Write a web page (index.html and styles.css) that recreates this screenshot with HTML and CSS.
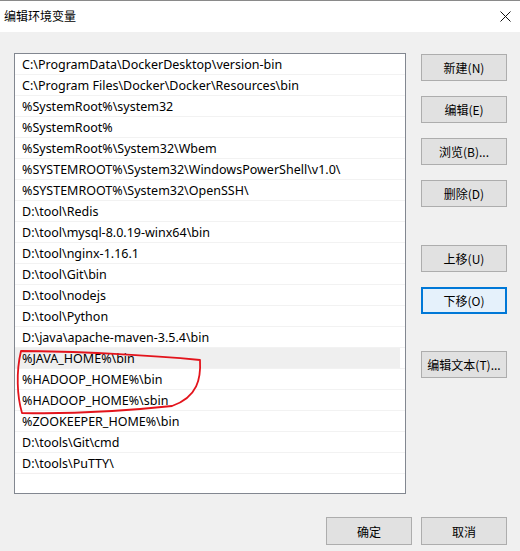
FILE: index.html
```html
<!DOCTYPE html>
<html lang="zh-CN">
<head>
<meta charset="utf-8">
<title>编辑环境变量</title>
<link rel="stylesheet" href="styles.css">
</head>
<body>
<div class="window">
  <div class="titlebar">
    <span class="title">编辑环境变量</span>
    <span class="close">
      <svg width="11" height="11" viewBox="0 0 11 11"><path d="M0.5 0.5 L10.5 10.5 M10.5 0.5 L0.5 10.5" stroke="#111" stroke-width="1" fill="none"/></svg>
    </span>
  </div>
  <div class="content">
    <div class="main">
      <div class="list">
        <div class="row">C:\ProgramData\DockerDesktop\version-bin</div>
        <div class="row">C:\Program Files\Docker\Docker\Resources\bin</div>
        <div class="row">%SystemRoot%\system32</div>
        <div class="row">%SystemRoot%</div>
        <div class="row">%SystemRoot%\System32\Wbem</div>
        <div class="row">%SYSTEMROOT%\System32\WindowsPowerShell\v1.0\</div>
        <div class="row">%SYSTEMROOT%\System32\OpenSSH\</div>
        <div class="row">D:\tool\Redis</div>
        <div class="row">D:\tool\mysql-8.0.19-winx64\bin</div>
        <div class="row">D:\tool\nginx-1.16.1</div>
        <div class="row">D:\tool\Git\bin</div>
        <div class="row">D:\tool\nodejs</div>
        <div class="row">D:\tool\Python</div>
        <div class="row">D:\java\apache-maven-3.5.4\bin</div>
        <div class="row selected">%JAVA_HOME%\bin</div>
        <div class="row">%HADOOP_HOME%\bin</div>
        <div class="row">%HADOOP_HOME%\sbin</div>
        <div class="row">%ZOOKEEPER_HOME%\bin</div>
        <div class="row">D:\tools\Git\cmd</div>
        <div class="row">D:\tools\PuTTY\</div>
        <svg class="mark" width="392" height="441" viewBox="14 53 392 441">
          <path d="M21 351 C70 351 150 355 200 360 C201 378 198 397 172 406 C125 411 65 414 22 413 C17 396 16 372 21 351 Z" fill="none" stroke="#e3141c" stroke-width="1.8" stroke-linejoin="round"/>
        </svg>
      </div>
      <div class="side">
        <button class="btn">新建(N)</button>
        <button class="btn">编辑(E)</button>
        <button class="btn">浏览(B)...</button>
        <button class="btn">删除(D)</button>
        <button class="btn gap-lg">上移(U)</button>
        <button class="btn focused">下移(O)</button>
        <button class="btn gap-lg2">编辑文本(T)...</button>
      </div>
    </div>
    <div class="footer">
      <button class="btn">确定</button>
      <button class="btn">取消</button>
    </div>
  </div>
</div>
</body>
</html>
```

FILE: styles.css
```css
* { box-sizing: border-box; }
html, body {
  margin: 0;
  padding: 0;
  width: 520px;
  height: 551px;
  overflow: hidden;
}
body {
  font-family: "Noto Sans", "Noto Sans CJK SC", sans-serif;
  font-size: 12px;
  color: #000;
  background: #f0f0f0;
}
.window {
  width: 520px;
  height: 551px;
  display: flex;
  flex-direction: column;
}
.titlebar {
  height: 32px;
  background: #fff;
  border-top: 1px solid #8a8a8a;
  display: flex;
  align-items: center;
  justify-content: space-between;
  padding: 0 9px 1px 4px;
}
.title {
  font-family: "Noto Sans CJK SC", sans-serif;
  font-size: 12px;
  line-height: 16px;
  color: #000;
}
.close {
  display: flex;
  width: 11px;
  height: 11px;
}
.content {
  flex: 1;
  display: flex;
  flex-direction: column;
  padding: 21px 13px 0 14px;
}
.main {
  display: flex;
  align-items: flex-start;
}
.list {
  position: relative;
  width: 392px;
  height: 441px;
  background: #fff;
  border: 1px solid #828790;
}
.row {
  height: 21px;
  line-height: 20px;
  padding: 1px 0 0 7px;
  border-bottom: 1px solid #f2f2f2;
  white-space: nowrap;
  overflow: hidden;
  font-family: "Noto Sans", "Noto Sans CJK SC", sans-serif;
  font-size: 12.5px;
  color: #000;
}
.row.selected {
  background: linear-gradient(to right, #efefef calc(100% - 5px), #fff 0);
}
.mark {
  position: absolute;
  left: -1px;
  top: -1px;
  pointer-events: none;
}
.side {
  margin-left: 15px;
  display: flex;
  flex-direction: column;
  gap: 15px;
  padding-top: 1px;
}
.btn {
  width: 86px;
  height: 27px;
  padding: 0;
  margin: 0;
  background: #e1e1e1;
  border: 1px solid #adadad;
  font-family: "Noto Sans CJK SC", sans-serif;
  font-size: 12px;
  color: #000;
  display: flex;
  align-items: center;
  justify-content: center;
}
.btn.focused {
  background: #e5f1fb;
  border: 2px solid #0078d7;
}
.gap-lg { margin-top: 23px; }
.gap-lg2 { margin-top: 22px; }
.footer {
  display: flex;
  justify-content: flex-end;
  gap: 9px;
  margin-top: 23px;
}
.footer .btn {
  height: 28px;
}
```
